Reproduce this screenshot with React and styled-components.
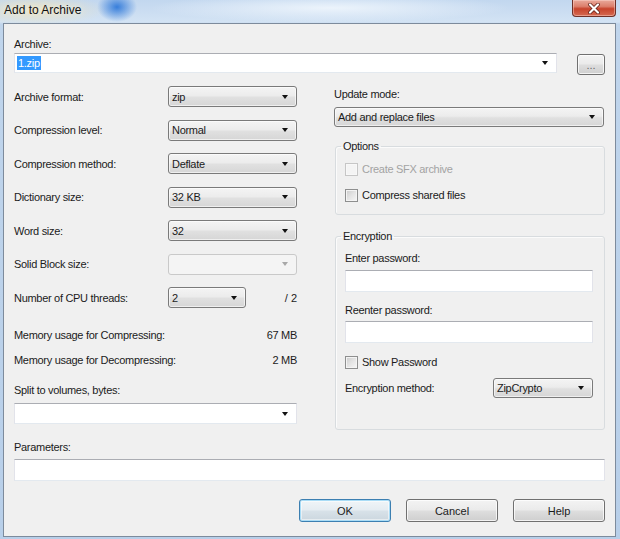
import React from 'react';
import styled, { createGlobalStyle, css } from 'styled-components';

const GlobalStyle = createGlobalStyle`
  html, body { margin: 0; padding: 0; width: 620px; height: 539px; overflow: hidden; }
  body { font-family: "Liberation Sans", Arial, sans-serif; }
  * { box-sizing: border-box; }
`;

const Window = styled.div`
  width: 620px;
  height: 539px;
  display: flex;
  flex-direction: column;
  padding: 0 4px 2px 3px;
  background:
    radial-gradient(ellipse 20px 15px at 117px 7px, rgba(30, 110, 215, 0.85), rgba(30, 110, 215, 0) 100%),
    radial-gradient(ellipse 70px 16px at 36px 10px, rgba(236, 228, 196, 0.95), rgba(236, 228, 196, 0) 100%),
    radial-gradient(ellipse 180px 14px at 330px 8px, rgba(238, 245, 252, 0.95), rgba(238, 245, 252, 0) 100%),
    linear-gradient(180deg, #c2d7ef 0px, #d3e3f4 22px, #c0d5ec 24px, #b8cfe9 100%);
`;

const TitleBar = styled.div`
  height: 23px;
  flex-shrink: 0;
  display: flex;
  justify-content: space-between;
  align-items: flex-start;
  padding-left: 1px;
`;

const TitleText = styled.span`
  margin-top: 3px;
  font-size: 12px;
  line-height: 14px;
  color: #111;
  text-shadow: 0 0 6px rgba(255, 250, 230, 0.9);
`;

const CloseButton = styled.div`
  width: 44px;
  height: 17px;
  display: flex;
  align-items: center;
  justify-content: center;
  border: 1px solid #6e3028;
  border-top: none;
  border-radius: 0 0 4px 4px;
  background: linear-gradient(180deg, #e9a99b 0%, #dc7f6c 40%, #c7432c 55%, #d56a52 100%);
  box-shadow: inset 0 0 0 1px rgba(255, 220, 210, 0.45);
`;

const Client = styled.div`
  flex: 1;
  display: flex;
  flex-direction: column;
  border: 1px solid #7d8b9c;
  background: #f0f0f0;
  padding: 13px 10px 0 10px;
  font-size: 11px;
  letter-spacing: -0.3px;
  color: #1b1b1b;
`;

const Label = styled.div`
  line-height: 14px;
  height: 14px;
  white-space: nowrap;
  color: ${(p) => (p.$disabled ? '#a3a3a3' : '#1b1b1b')};
  width: ${(p) => (p.$w ? `${p.$w}px` : 'auto')};
  flex-shrink: 0;
  margin-top: ${(p) => (p.$mt ? `${p.$mt}px` : '0')};
`;

const ArchiveRow = styled.div`
  display: flex;
  align-items: flex-start;
  gap: 20px;
  margin-top: 2px;
`;

const comboBase = css`
  position: relative;
  height: ${(p) => p.$h || 21}px;
  width: ${(p) => (p.$w ? `${p.$w}px` : 'auto')};
  flex: 0 0 auto;
  display: flex;
  align-items: center;
  padding-left: 3px;
  white-space: nowrap;
  margin-top: ${(p) => (p.$mt ? `${p.$mt}px` : '0')};
  &::after {
    content: '';
    position: absolute;
    right: 8px;
    top: 50%;
    margin-top: -2px;
    border-left: 3.5px solid transparent;
    border-right: 3.5px solid transparent;
    border-top: 4px solid ${(p) => (p.$variant === 'disabled' ? '#a8a8a8' : '#111')};
  }
`;

const Combo = styled.div`
  ${comboBase}
  ${(p) =>
    p.$variant === 'editable'
      ? css`
          background: #fff;
          border: 1px solid #e2e3ea;
          border-top-color: #abadb3;
          border-bottom-color: #e3e9ef;
        `
      : p.$variant === 'disabled'
      ? css`
          background: #f4f4f4;
          border: 1px solid #c9c9c9;
          border-radius: 3px;
        `
      : css`
          background: linear-gradient(180deg, #f4f4f4 0%, #ececec 45%, #e0e0e0 55%, #d6d6d6 100%);
          border: 1px solid #7a7a7a;
          border-radius: 3px;
          box-shadow: inset 0 0 0 1px rgba(255, 255, 255, 0.6);
        `}
`;

const Selected = styled.span`
  background: #3399ff;
  color: #fff;
  line-height: 14px;
  padding: 0 1px;
  margin-left: -1px;
`;

const TextBox = styled.div`
  height: ${(p) => p.$h || 22}px;
  background: #fff;
  border: 1px solid #e2e3ea;
  border-top-color: #abadb3;
  border-bottom-color: #e3e9ef;
  margin-top: ${(p) => (p.$mt ? `${p.$mt}px` : '0')};
`;

const Button = styled.div`
  width: ${(p) => p.$w}px;
  height: ${(p) => p.$h}px;
  margin-top: ${(p) => (p.$mt ? `${p.$mt}px` : '0')};
  display: flex;
  align-items: center;
  justify-content: center;
  border-radius: 3px;
  letter-spacing: 0;
  flex-shrink: 0;
  color: ${(p) => (p.$dim ? '#6a6a6a' : '#1b1b1b')};
  border: 1px solid ${(p) => (p.$default ? '#3c7fb1' : '#707070')};
  background: ${(p) =>
    p.$default
      ? 'linear-gradient(180deg, #f0f5f8 0%, #e6edf2 45%, #d7e1e8 55%, #cbd6de 100%)'
      : 'linear-gradient(180deg, #f3f3f3 0%, #ebebeb 45%, #dddddd 55%, #cfcfcf 100%)'};
  box-shadow: ${(p) =>
    p.$default
      ? 'inset 0 0 0 1px #a9dcf6, inset 0 0 0 2px rgba(255,255,255,0.5)'
      : 'inset 0 0 0 1px rgba(255,255,255,0.75)'};
`;

const Columns = styled.div`
  display: grid;
  grid-template-columns: 283px 271px;
  column-gap: 37px;
  margin-top: 11px;
  align-items: start;
`;

const LeftCol = styled.div`
  display: flex;
  flex-direction: column;
`;

const FieldRows = styled.div`
  display: flex;
  flex-direction: column;
  gap: 12.5px;
`;

const FieldRow = styled.div`
  display: flex;
  align-items: center;
  height: 21px;
`;

const Suffix = styled.span`
  margin-left: auto;
  letter-spacing: 0;
`;

const InfoRow = styled.div`
  display: flex;
  justify-content: space-between;
  line-height: 14px;
  height: 14px;
  margin-top: ${(p) => p.$mt}px;
`;

const RightCol = styled.div`
  display: flex;
  flex-direction: column;
  padding-top: 1px;
`;

const Group = styled.fieldset`
  margin: ${(p) => p.$mt}px 0 0 1px;
  padding: ${(p) => p.$pt}px 11px ${(p) => p.$pb}px 9px;
  min-width: 0;
  border: 1px solid #d8dcdf;
  border-radius: 3px;
  box-shadow: inset 1px 1px 0 #fbfbfb;
  display: flex;
  flex-direction: column;
`;

const Legend = styled.legend`
  padding: 0 2px;
  margin-left: -4px;
  line-height: 14px;
  font-size: 11px;
  color: #1b1b1b;
`;

const CheckRow = styled.div`
  display: flex;
  align-items: center;
  gap: 4px;
  height: 14px;
  line-height: 14px;
  margin-top: ${(p) => (p.$mt ? `${p.$mt}px` : '0')};
  color: ${(p) => (p.$disabled ? '#a3a3a3' : '#1b1b1b')};
`;

const CheckBox = styled.span`
  width: 13px;
  height: 13px;
  flex-shrink: 0;
  border: 1px solid ${(p) => (p.$disabled ? '#c6c6c6' : '#8e8f8f')};
  background: ${(p) =>
    p.$disabled
      ? '#f4f4f4'
      : 'linear-gradient(135deg, #cbcbcb 0%, #e4e4e4 50%, #f7f7f7 100%)'};
  box-shadow: inset 0 0 0 1px ${(p) => (p.$disabled ? '#f8f8f8' : '#f4f4f4')};
`;

const MethodRow = styled.div`
  display: flex;
  align-items: center;
  justify-content: space-between;
  height: 20px;
  margin-top: 9px;
`;

const ButtonBar = styled.div`
  display: flex;
  justify-content: flex-end;
  gap: 15px;
  margin-top: 18px;
`;

function CloseIcon() {
  return (
    <svg width="12" height="11" viewBox="0 0 12 11">
      <path d="M2 1.5 L10 9.5 M10 1.5 L2 9.5" stroke="#5a1a12" strokeWidth="3.6" strokeLinecap="round" />
      <path d="M2 1.5 L10 9.5 M10 1.5 L2 9.5" stroke="#ffffff" strokeWidth="2.2" strokeLinecap="round" />
    </svg>
  );
}

const leftFields = [
  { label: 'Archive format:', value: 'zip' },
  { label: 'Compression level:', value: 'Normal' },
  { label: 'Compression method:', value: 'Deflate' },
  { label: 'Dictionary size:', value: '32 KB' },
  { label: 'Word size:', value: '32' },
  { label: 'Solid Block size:', value: '', disabled: true },
];

export default function App() {
  return (
    <>
      <GlobalStyle />
      <Window>
        <TitleBar>
          <TitleText>Add to Archive</TitleText>
          <CloseButton>
            <CloseIcon />
          </CloseButton>
        </TitleBar>
        <Client>
          <Label>Archive:</Label>
          <ArchiveRow>
            <Combo $variant="editable" $h={20} $w={543}>
              <Selected>1.zip</Selected>
            </Combo>
            <Button $w={28} $h={21} $mt={1} $dim>...</Button>
          </ArchiveRow>

          <Columns>
            <LeftCol>
              <FieldRows>
                {leftFields.map((f) => (
                  <FieldRow key={f.label}>
                    <Label $w={154}>{f.label}</Label>
                    <Combo $variant={f.disabled ? 'disabled' : 'readonly'} $w={129}>
                      {f.value}
                    </Combo>
                  </FieldRow>
                ))}
                <FieldRow>
                  <Label $w={154}>Number of CPU threads:</Label>
                  <Combo $variant="readonly" $w={78}>2</Combo>
                  <Suffix>/ 2</Suffix>
                </FieldRow>
              </FieldRows>
              <InfoRow $mt={20}>
                <span>Memory usage for Compressing:</span>
                <span>67 MB</span>
              </InfoRow>
              <InfoRow $mt={11}>
                <span>Memory usage for Decompressing:</span>
                <span>2 MB</span>
              </InfoRow>
              <Label $mt={16}>Split to volumes, bytes:</Label>
              <Combo $variant="editable" $mt={6} />
            </LeftCol>

            <RightCol>
              <Label>Update mode:</Label>
              <Combo $variant="readonly" $h={20} $w={270} $mt={6}>
                Add and replace files
              </Combo>

              <Group $mt={12} $pt={9} $pb={12}>
                <Legend>Options</Legend>
                <CheckRow $disabled>
                  <CheckBox $disabled />
                  Create SFX archive
                </CheckRow>
                <CheckRow $mt={12}>
                  <CheckBox />
                  Compress shared files
                </CheckRow>
              </Group>

              <Group $mt={14} $pt={8} $pb={31}>
                <Legend>Encryption</Legend>
                <Label>Enter password:</Label>
                <TextBox $mt={5} />
                <Label $mt={11}>Reenter password:</Label>
                <TextBox $mt={4} />
                <CheckRow $mt={12}>
                  <CheckBox />
                  Show Password
                </CheckRow>
                <MethodRow>
                  <Label>Encryption method:</Label>
                  <Combo $variant="readonly" $h={20} $w={100}>ZipCrypto</Combo>
                </MethodRow>
              </Group>
            </RightCol>
          </Columns>

          <Label $mt={10}>Parameters:</Label>
          <TextBox $mt={5} />

          <ButtonBar>
            <Button $w={92} $h={23} $default>OK</Button>
            <Button $w={92} $h={23}>Cancel</Button>
            <Button $w={92} $h={23}>Help</Button>
          </ButtonBar>
        </Client>
      </Window>
    </>
  );
}
